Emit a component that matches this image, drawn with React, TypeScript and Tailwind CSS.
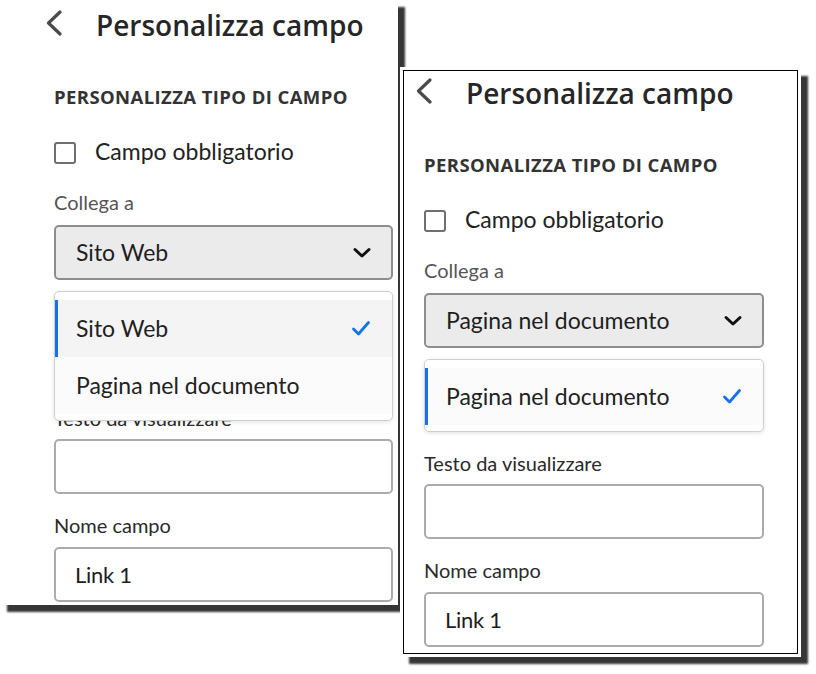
import React from "react"

const body = { fontFamily: "Lato, 'Noto Sans', sans-serif" }
const title = { fontFamily: "'Open Sans', 'Noto Sans', sans-serif" }

function BackIcon() {
  return (
    <svg width="18" height="26" viewBox="0 0 18 26" className="shrink-0">
      <path d="M15 2 L3.5 13 L15 24" fill="none" stroke="#4a4a4a" strokeWidth="3.2" strokeLinecap="round" strokeLinejoin="round" />
    </svg>
  )
}

function ChevronDown() {
  return (
    <svg width="20" height="12" viewBox="0 0 20 12">
      <path d="M3 2.5 L10 9 L17 2.5" fill="none" stroke="#111" strokeWidth="3" strokeLinecap="round" strokeLinejoin="round" />
    </svg>
  )
}

function Check() {
  return (
    <svg width="20" height="17" viewBox="0 0 20 17">
      <path d="M2.5 9 L7.5 14 L17.5 2.5" fill="none" stroke="#1473e6" strokeWidth="2.8" strokeLinecap="round" strokeLinejoin="round" />
    </svg>
  )
}

type Item = { label: string; selected?: boolean; hover?: boolean }

function Panel({
  className,
  value,
  items,
  gap,
}: {
  className: string
  value: string
  items: Item[]
  gap: string
}) {
  return (
    <div className={className}>
      <div className="ml-[-9px] flex h-[36px] items-center gap-[33px]">
        <BackIcon />
        <span style={title} className="pt-[4px] text-[28px] font-semibold leading-[36px] text-[#262626]">
          Personalizza campo
        </span>
      </div>

      <div style={title} className="mt-[44px] text-[18.5px] font-bold leading-[24px] tracking-[0.4px] text-[#333]">
        PERSONALIZZA TIPO DI CAMPO
      </div>

      <div className="mt-[32px] flex h-[24px] items-center gap-[19px]">
        <span className="h-[22px] w-[22px] rounded-[3px] border-2 border-[#6f6f6f] bg-white" />
        <span style={body} className="pb-[4px] text-[23px] leading-[24px] text-[#222]">
          Campo obbligatorio
        </span>
      </div>

      <div style={body} className="mt-[25px] text-[20px] leading-[24px] text-[#555]">
        Collega a
      </div>

      <div className="relative mt-[11px]">
        <div className="flex h-[55px] items-center justify-between rounded-[5px] border-2 border-[#8e8e8e] bg-[#ebebeb] pl-[20px] pr-[19px]">
          <span style={body} className="text-[23px] text-[#1e1e1e]">
            {value}
          </span>
          <ChevronDown />
        </div>
        <div className="absolute left-0 right-0 top-full z-10 mt-[11px] rounded-[5px] border border-[#cfcfcf] bg-white pb-[6px] pt-[8px] shadow-[0_1px_4px_rgba(0,0,0,0.12)]">
          {items.map((it) => (
            <div
              key={it.label}
              className={
                "flex h-[57px] items-center justify-between border-l-[3px] pl-[18px] pr-[21px] " +
                (it.selected ? "border-[#1473e6] " : "border-transparent ") +
                (it.hover ? "bg-[#f4f4f4]" : "bg-[#fbfbfb]")
              }
            >
              <span style={body} className="text-[23px] text-[#222]">
                {it.label}
              </span>
              {it.selected && <Check />}
            </div>
          ))}
        </div>
      </div>

      <div style={body} className={gap + " text-[20px] leading-[24px] text-[#2a2a2a]"}>
        Testo da visualizzare
      </div>
      <div className="mt-[9px] h-[55px] rounded-[5px] border-2 border-[#ababab] bg-white" />

      <div style={body} className="mt-[19px] text-[20px] leading-[24px] text-[#2a2a2a]">
        Nome campo
      </div>
      <div className="mt-[10px] flex h-[55px] items-center rounded-[5px] border-2 border-[#ababab] bg-white pl-[19px]">
        <span style={body} className="text-[22px] tracking-[-0.3px] text-[#1e1e1e]">
          Link 1
        </span>
      </div>
    </div>
  )
}

export default function App() {
  return (
    <div className="relative h-[674px] w-[816px] overflow-hidden bg-white">
      <Panel
        className="absolute left-0 top-0 h-[605px] w-[398px] bg-white pl-[54px] pr-[5px] pt-[5px] shadow-[7px_7px_2px_0_#363636]"
        value="Sito Web"
        items={[
          { label: "Sito Web", selected: true, hover: true },
          { label: "Pagina nel documento" },
        ]}
        gap="mt-[126px]"
      />
      <Panel
        className="absolute left-[403px] top-[70px] h-[584px] w-[395px] border border-black bg-white pl-[20px] pr-[33px] pt-[2px] shadow-[0_0_0_3px_#fff,8px_8px_2px_2px_#363636]"
        value="Pagina nel documento"
        items={[{ label: "Pagina nel documento", selected: true }]}
        gap="mt-[103px]"
      />
    </div>
  )
}
